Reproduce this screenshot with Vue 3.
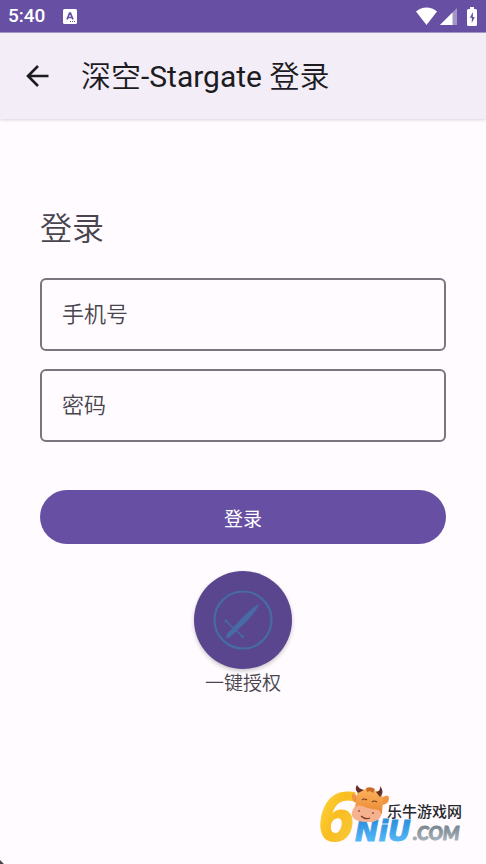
<template>
  <div class="page">
    <!-- Status bar -->
    <div class="status">
      <span class="time">5:40</span>
      <svg class="keyboard" viewBox="0 0 14 15" aria-hidden="true">
        <rect width="14" height="15" rx="1.500" fill="#fff" />
        <path d="M4 10.500 6.600 4h.8L10 10.500M5 8.500h4" fill="none" stroke="#674fa3" stroke-width="1.700" />
        <path d="M7 12.500h1M9 12.500h1M11 12.500h1" stroke="#674fa3" stroke-width="1" />
      </svg>

      <div class="status-icons">
        <svg class="wifi" viewBox="0 0 21 18" aria-hidden="true">
          <path d="M10.500 18 0 4.500C6-.9 15-.9 21 4.500Z" fill="#fff" />
        </svg>
        <svg class="signal" viewBox="0 0 17 17" aria-hidden="true">
          <path d="M17 0v17H0Z" fill="#fff" opacity=".4" />
          <path d="M12.500 4.500V17H0Z" fill="#fff" />
        </svg>
        <svg class="battery" viewBox="0 0 10 19" aria-hidden="true">
          <path d="M3 0h4v2h1.500Q10 2 10 3.500v14Q10 19 8.500 19h-7Q0 19 0 17.500v-14Q0 2 1.500 2H3Z" fill="#fff" />
          <path d="M6 5 2.800 10.800h2V16l3-6H5.800Z" fill="#674fa3" />
        </svg>
      </div>
    </div>

    <!-- Top bar -->
    <header class="topbar">
      <button class="back" type="button" aria-label="返回" @click="goBack">
        <svg viewBox="0 0 24 24" aria-hidden="true">
          <path d="M22.500 12H2.500M12 2 2 12l10 10" fill="none" stroke="#1c1b1f" stroke-width="2.600" />
        </svg>
      </button>
      <h1>深空<span>-Stargate </span>登录</h1>
    </header>

    <main class="content">
      <h2>登录</h2>

      <form @submit.prevent="onSubmit">
        <div class="fields">
          <input v-model.trim="form.phone" type="tel" placeholder="手机号" aria-label="手机号" autocomplete="tel" />
          <input v-model="form.password" type="password" placeholder="密码" aria-label="密码" autocomplete="current-password" />
        </div>
        <button class="primary" type="submit">登录</button>
      </form>

      <div class="quick">
        <button id="auth" class="fab" type="button" aria-labelledby="auth-label" @click="onAuthorize">
          <svg viewBox="0 0 60 60" aria-hidden="true">
            <circle cx="30" cy="30" r="28.500" fill="none" stroke="#466ba5" stroke-width="2.200" />
            <path d="M46.500 13.500Q43 22 34 31L16.500 47.500Q14.500 48.500 13.500 47.500 12.500 46.500 13.500 44.500L30 27Q38 18.500 46.500 13.500Z" fill="#466ba5" />
            <path d="M13 31 29 46" stroke="#466ba5" stroke-width="1.600" />
            <circle cx="13" cy="31" r="1.600" fill="#466ba5" />
            <circle cx="29.500" cy="46.500" r="1.600" fill="#466ba5" />
          </svg>
        </button>
        <label id="auth-label" for="auth">一键授权</label>
      </div>
    </main>

    <footer class="foot">
      <svg class="mark" viewBox="0 0 144 62" role="img" aria-label="乐牛游戏网 6NiU.COM">
        <defs>
          <linearGradient id="gold" x1="0" y1="0" x2="1" y2="1">
            <stop offset="0" stop-color="#ffe04a" />
            <stop offset=".5" stop-color="#f9bd20" />
            <stop offset="1" stop-color="#f5cf45" />
          </linearGradient>
          <linearGradient id="blue" x1="0" y1="0" x2="0" y2="1">
            <stop offset=".2" stop-color="#2d91df" />
            <stop offset="1" stop-color="#62c5ff" />
          </linearGradient>
          <linearGradient id="steel" x1="0" y1="0" x2="0" y2="1">
            <stop offset=".2" stop-color="#77858e" />
            <stop offset="1" stop-color="#b1bdc4" />
          </linearGradient>
          <linearGradient id="hide" x1="0" y1="0" x2="0" y2="1">
            <stop offset="0" stop-color="#fbb35b" />
            <stop offset="1" stop-color="#e57b27" />
          </linearGradient>
        </defs>
        <text class="six" x="-2" y="57" fill="url(#gold)" stroke="url(#gold)">6</text>
        <text class="niu" x="35" y="57" fill="url(#blue)" stroke="url(#blue)">NiU</text>
        <text class="com" x="93" y="56" fill="url(#steel)" stroke="url(#steel)">.COM</text>
        <!-- Cow head -->
        <path d="M37 12Q31 6 32 14q1 5 6 5ZM61 14q8-5 8 0 0 7-8 7Z" fill="#ef9542" />
        <path d="M37 14q-1-4 2-7l7-2 11 2q6 3 6 9l-1 13q-3 9-13 8-14 0-15-10Z" fill="url(#hide)" />
        <path d="M38 9q-4-4-1-8 2 4 7 5ZM56 8q5-1 4-6 5 6 0 11Z" fill="#632f2c" />
        <path d="M46 4q5-2 9 1l-2 4-3-2-3 1Z" fill="#c96a2a" />
        <path d="M32 28q2-8 10-6 5 2 10 3 10 0 9 6-2 8-15 7-16-1-14-10Z" fill="#f6b28e" />
        <path d="M42 16q2-2 5 0M52 18q2-2 5 0M41 32q4 4 9 2" fill="none" stroke="#7a3c26" stroke-width="1.200" />
        <circle cx="39" cy="27" r="1" fill="#a45343" />
        <circle cx="53" cy="29" r="1" fill="#a45343" />
        <text class="cn" x="67" y="33">乐牛游戏网</text>
      </svg>
    </footer>
  </div>
</template>

<script setup>
import { reactive } from "vue";

const form = reactive({
  phone: "",
  password: "",
});

function goBack() {
  window.history.back();
}

function onSubmit() {
  if (!form.phone || !form.password) return;
  // TODO: call the login API
  console.log("login", form.phone);
}

function onAuthorize() {
  // TODO: one-tap authorization
  console.log("authorize");
}
</script>

<style>
body{
  margin:0;
  background:#fffbfe;
}
</style>

<style scoped>
.page{
  min-height:100vh;
  display:flex;
  flex-direction:column;
  position:relative;
  overflow:hidden;
  background:#fffbfe;
  color:#49454f;
  font-family: Roboto, "Noto Sans CJK SC", sans-serif;
  font-weight:350;
}
/* dark screen corner */
.page::after{
  content:"";
  position:absolute;
  left:-4px;
  bottom:-4px;
  width:7px;
  height:7px;
  background:#49454f;
  transform: rotate(45deg);
}

.status{
  height:33px;
  padding:0 9px 0 8px;
  display:flex;
  align-items:center;
  background:#674fa3;
  border-bottom:1px solid #a899ca;
  box-sizing:border-box;
}
.time{
  font-size:19px;
  font-weight:500;
  line-height:32px;
  color:#fff;
}
.keyboard{
  width:14px;
  height:15px;
  margin-left:18px;
}
.status-icons{
  margin-left:auto;
  display:flex;
  align-items:center;
}
.wifi{ width:21px; height:18px; }
.signal{ width:17px; height:17px; margin-left:3px; }
.battery{ width:10px; height:19px; margin-left:10px; }

.topbar{
  height:86px;
  padding:0 24px;
  display:flex;
  align-items:center;
  gap:29px;
  box-sizing:border-box;
  background:#f2edf6;
  box-shadow: 0 1px 3px rgba(0,0,0,.16);
}
.back{
  width:28px;
  height:28px;
  padding:2px;
  border:none;
  background:none;
  cursor:pointer;
}
.back svg{
  display:block;
  width:24px;
  height:24px;
}
h1{
  margin:0;
  padding-top:2px;
  font-size:30px;
  font-weight:350;
  line-height:40px;
  color:#1c1b1f;
}
h1 span{ font-weight:400; }

.content{
  padding:86px 40px 0;
}
h2{
  margin:0 0 25px;
  font-size:32px;
  font-weight:350;
  line-height:48px;
}

.fields{
  display:flex;
  flex-direction:column;
  gap:18px;
}
.fields input{
  width:100%;
  height:73px;
  box-sizing:border-box;
  padding:0 20px;
  border:2px solid #79747e;
  border-radius:6px;
  outline:none;
  background:transparent;
  font-family:inherit;
  font-size:22px;
  font-weight:350;
  color:#1c1b1f;
}
.fields input::placeholder{
  color:#49454f;
  opacity:1;
}
.fields input:focus{ border-color:#674fa3; }

.primary{
  display:block;
  width:100%;
  height:54px;
  margin-top:48px;
  padding:0;
  border:none;
  border-radius:27px;
  background:#674fa3;
  color:#fff;
  font-family:inherit;
  font-size:19px;
  font-weight:400;
  cursor:pointer;
}

.quick{
  margin-top:27px;
  display:flex;
  flex-direction:column;
  align-items:center;
}
.fab{
  width:98px;
  height:98px;
  padding:19px;
  border:none;
  border-radius:50%;
  background:#5a468f;
  box-shadow: 0 2px 4px rgba(0,0,0,.22);
  cursor:pointer;
}
.fab svg{
  display:block;
  width:60px;
  height:60px;
}
.quick label{
  font-size:19px;
  line-height:30px;
}

.foot{
  margin-top:auto;
  padding:24px 22px 18px;
  display:flex;
  justify-content:flex-end;
}
.mark{
  width:144px;
  height:62px;
  overflow:visible;
}
.six{
  font-family: "Open Sans", sans-serif;
  font-size:66px;
  font-weight:700;
  font-style:italic;
}
.niu{
  font-family: "DejaVu Sans", sans-serif;
  font-size:28px;
  font-weight:700;
  font-style:italic;
  stroke-width:1px;
}
.com{
  font-family: Lato, sans-serif;
  font-size:19px;
  font-weight:900;
  font-style:italic;
}
.cn{
  font-family: "Noto Sans CJK SC", sans-serif;
  font-size:15px;
  font-weight:500;
  fill:#25272b;
}
</style>
